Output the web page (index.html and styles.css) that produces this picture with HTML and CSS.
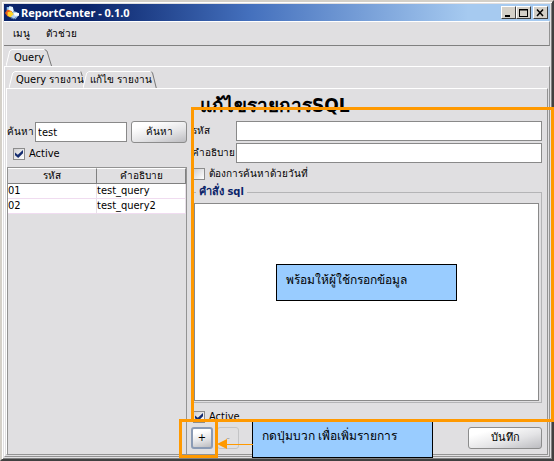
FILE: index.html
```html
<!DOCTYPE html>
<html lang="th">
<head>
<meta charset="utf-8">
<title>ReportCenter - 0.1.0</title>
<link rel="stylesheet" href="styles.css">
</head>
<body>
<div class="window">
  <header class="titlebar">
    <svg class="app-icon" viewBox="0 0 16 16" aria-hidden="true">
      <path d="M2 1h6l2 5-4 4-4-2z" fill="#8ac4ee"/>
      <path d="M5 0l4 1 1 5-4 2-2-4z" fill="#e8f6ff"/>
      <path d="M6 11l4-5 4 1 2 3-4 5-5-1z" fill="#b8d4ee"/>
      <path d="M0 8l3-4 5 2-1 5-4 1z" fill="#e85c18"/>
      <path d="M3 7l4-1 3 3-4 4-3-2z" fill="#ffd428"/>
      <path d="M10 8h6v3h-5z" fill="#fff"/>
      <path d="M7 13l3 2 3-2" fill="none" stroke="#395d9b"/>
    </svg>
    <h1 class="window-title">ReportCenter - 0.1.0</h1>
    <div class="window-controls">
      <button class="control" type="button" aria-label="Minimize"><svg viewBox="0 0 11 10"><path d="M2 8h5" stroke="#000" stroke-width="2"/></svg></button>
      <button class="control" type="button" aria-label="Maximize"><svg viewBox="0 0 11 10"><path d="M1 1.5h9M1.5 1v8M9.5 1v8M1 8.5h9M1 2h9" fill="none" stroke="#000"/></svg></button>
      <button class="control close" type="button" aria-label="Close"><svg viewBox="0 0 11 10"><path d="M2 1.500l6 6.500M8 1.500l-6 6.500" stroke="#000" stroke-width="1.500"/></svg></button>
    </div>
  </header>

  <nav class="menubar">
    <button type="button">เมนู</button>
    <button type="button">ตัวช่วย</button>
  </nav>

  <div class="tabs outer-tabs">
    <button class="tab" type="button">
      <svg class="tab-shape" viewBox="0 0 100 17" preserveAspectRatio="none" aria-hidden="true"><path class="lit" d="M0 17L8 2 13 .5H84"/><path class="shade" d="M84 .5L89 2 99 17"/></svg>
      <span>Query</span>
    </button>
  </div>
  <div class="outer-panel">
    <div class="tabs inner-tabs">
      <button class="tab" type="button">
        <svg class="tab-shape" viewBox="0 0 100 17" preserveAspectRatio="none" aria-hidden="true"><path class="lit" d="M0 17L5 2 8 .5H97"/><path class="shade" d="M97 .5L99 5"/></svg>
        <span>Query <span class="thai">รายงาน</span></span>
      </button>
      <button class="tab selected" type="button">
        <svg class="tab-shape" viewBox="0 0 100 17" preserveAspectRatio="none" aria-hidden="true"><path class="lit" d="M0 17L5 2 8 .5H92"/><path class="shade" d="M92 .5L94 2 99 17"/></svg>
        <span class="thai">แก้ไข รายงาน</span>
      </button>
    </div>

    <main class="inner-panel">
      <section class="sidebar">
        <form class="search">
          <label class="thai" for="search">ค้นหา</label>
          <input id="search" class="text" type="text" value="test">
          <button class="button thai" type="button">ค้นหา</button>
        </form>
        <label class="check sidebar-check"><input type="checkbox" checked>Active</label>
        <div class="table-box">
          <table>
            <thead><tr><th>รหัส</th><th>คำอธิบาย</th></tr></thead>
            <tbody>
              <tr><td>01</td><td>test_query</td></tr>
              <tr><td>02</td><td>test_query2</td></tr>
            </tbody>
          </table>
        </div>
      </section>

      <form class="editor">
        <h2>แก้ไขรายการSQL</h2>
        <div class="field"><label class="thai" for="code">รหัส</label><input id="code" class="text" type="text"></div>
        <div class="field"><label class="thai" for="desc">คำอธิบาย</label><input id="desc" class="text" type="text"></div>
        <label class="check date-check thai"><input type="checkbox">ต้องการค้นหาด้วยวันที่</label>
        <fieldset>
          <legend>คำสั่ง sql</legend>
          <textarea aria-label="คำสั่ง sql"></textarea>
        </fieldset>
        <label class="check active-check"><input type="checkbox" checked>Active</label>
        <div class="actions">
          <button class="button square focused" type="button">+</button>
          <button class="button square" type="button" disabled>-</button>
          <button class="button save" type="button">บันทึก</button>
        </div>
      </form>
    </main>
  </div>
</div>

<div class="highlight form-highlight"></div>
<div class="highlight add-highlight"></div>
<p class="callout form-callout">พร้อมให้ผู้ใช้กรอกข้อมูล</p>
<p class="callout add-callout">กดปุ่มบวก เพื่อเพิ่มรายการ</p>
<svg class="arrow" viewBox="0 0 36 10" aria-hidden="true"><path d="M0 5L10 0V10z" fill="#ff9900"/><path d="M8 5.500H36" stroke="#ff9900"/></svg>
</body>
</html>
```
FILE: styles.css
```css
* { box-sizing: border-box; }

:root {
  --face: #e0dfe1;
  --line: #939393;
  --orange: #ff9900;
  --navy: #0a246a;
}

body {
  position: relative;
  min-height: 100vh;
  margin: 0;
  display: flex;
  background: var(--face);
  color: #000;
  font: 11px/14px "DejaVu Sans Condensed", "DejaVu Sans", "Noto Sans", sans-serif;
}

button, input, textarea { font: inherit; color: inherit; }
button { margin: 0; padding: 0; border: 0; background: none; }
.thai { font-size: 10px; }

.window {
  flex: 1;
  min-width: 0;
  display: flex;
  flex-direction: column;
  padding: 2px;
  border: 2px solid;
  border-color: #d4d0c8 #404040 #404040 #d4d0c8;
  box-shadow: inset 1px 1px #fff, inset -1px -1px #808080;
}

.titlebar {
  height: 17px;
  display: flex;
  align-items: center;
  gap: 2px;
  padding: 0 2px 0 1px;
  background: linear-gradient(90deg, var(--navy) 15%, #4470bd 45%, #a6caf0 85%);
}
.app-icon { width: 14px; height: 16px; }
.window-title {
  flex: 1;
  margin: 0;
  color: #fff;
  font-family: "Noto Sans", "Open Sans", sans-serif;
  font-size: 11px;
  font-weight: bold;
}
.window-controls { display: flex; }
.control {
  width: 15px;
  height: 13px;
  display: flex;
  align-items: center;
  justify-content: center;
  background: #d4d0c8;
  border: 1px solid;
  border-color: #fff #404040 #404040 #fff;
}
.control svg { width: 11px; height: 10px; }
.close { margin-left: 2px; }

.menubar {
  height: 25px;
  display: flex;
  align-items: center;
  gap: 16px;
  padding-left: 9px;
  font-size: 10px;
  border-top: 1px solid #fff;
  border-right: 1px solid var(--line);
  border-bottom: 1px solid #808080;
}

.tabs { display: flex; }
.tab {
  position: relative;
  height: 17px;
  text-align: left;
  white-space: nowrap;
}
.tab-shape {
  position: absolute;
  inset: 0;
  width: 100%;
  height: 100%;
}
.tab-shape path { fill: none; vector-effect: non-scaling-stroke; }
.tab-shape .lit { stroke: #fff; }
.tab-shape .shade { stroke: #777; }
.tab span { position: relative; }

.outer-tabs { padding: 3px 0 0 2px; }
.outer-tabs .tab { width: 46px; padding-left: 8px; }
.outer-panel {
  flex: 1;
  display: flex;
  flex-direction: column;
  padding: 4px 1px 1px;
  border: 1px solid;
  border-color: #fff var(--line) var(--line) #fff;
}
.inner-tabs { padding-left: 3px; }
.inner-tabs .tab { width: 74px; padding-left: 7px; }

.inner-panel {
  flex: 1;
  display: grid;
  grid-template-columns: 180px minmax(0, 1fr);
  gap: 4px;
  border: 1px solid;
  border-color: #fff var(--line) var(--line) #fff;
}

.sidebar {
  display: flex;
  flex-direction: column;
  padding-top: 32px;
}
.search {
  display: flex;
  align-items: center;
  gap: 4px;
}
.search label { flex: none; width: 24px; white-space: nowrap; }
.search .text { flex: 1; min-width: 0; }
.search .button { width: 56px; }
.text {
  height: 20px;
  padding: 0 2px;
  background: #fff;
  border: 1px solid #898989;
  border-radius: 0;
}
.button {
  height: 22px;
  border: 1px solid #8c8c8c;
  border-radius: 3px;
  background: linear-gradient(165deg, #fff 20%, #e4e4e6 60%, #bcbcc0);
}

.check { display: flex; align-items: center; gap: 4px; }
.check input {
  appearance: none;
  width: 12px;
  height: 12px;
  margin: 0;
  display: grid;
  place-items: center;
  border: 1px solid #8c8c8c;
  background: linear-gradient(135deg, #cfcfd2, #fff);
}
.check input:checked::before {
  content: "";
  width: 8px;
  height: 8px;
  background: #142c70;
  clip-path: polygon(0 30%, 35% 60%, 100% 0, 100% 40%, 40% 100%, 0 65%);
}
.sidebar-check { padding: 4px 6px 6px; }

.table-box {
  flex: 1;
  border: 1px solid var(--line);
  border-bottom: 0;
}
table {
  width: 100%;
  table-layout: fixed;
  border-collapse: separate;
  border-spacing: 0;
}
th, td { height: 15px; padding: 0; line-height: 14px; }
th {
  height: 16px;
  font-size: 10px;
  font-weight: normal;
  border-top: 1px solid #fff;
  border-right: 1px solid #808080;
  border-bottom: 1px solid #808080;
}
td {
  background: #fff;
  border-right: 1px solid #e8e0e8;
  border-bottom: 1px solid #f0dcf0;
}

.editor {
  display: flex;
  flex-direction: column;
  padding-right: 5px;
}
h2 {
  height: 25px;
  margin: 4px 0 3px;
  padding-left: 9px;
  font-size: 19px;
  line-height: 25px;
  white-space: nowrap;
}
.field {
  display: flex;
  align-items: center;
  padding-left: 1px;
  margin-bottom: 2px;
}
.field label { width: 44px; white-space: nowrap; }
.field .text { flex: 1; min-width: 0; }
.date-check { padding: 2px 2px 4px; }
fieldset {
  flex: 1;
  display: flex;
  min-width: 0;
  margin: 0;
  padding: 4px 2px 1px;
  border: 1px solid #b4b4b6;
}
legend {
  height: 14px;
  margin-left: 2px;
  padding: 0 3px;
  color: var(--navy);
  font-weight: bold;
}
textarea {
  flex: 1;
  min-width: 0;
  resize: none;
  background: #fff;
  border: 1px solid #898989;
  border-radius: 0;
}
.active-check { padding: 7px 2px 0; }
.actions {
  display: flex;
  gap: 4px;
  padding: 3px 0 5px;
}
.square { width: 22px; }
.focused { border: 2px solid #8b9bb5; }
.button:disabled { color: #aaa; background: none; border-color: #c4c4c6; }
.save { width: 74px; margin-left: auto; }

.highlight { position: absolute; border: 3px solid var(--orange); }
.form-highlight { top: 107px; right: 0; bottom: 39px; left: 191px; }
.add-highlight { bottom: 3px; left: 179px; width: 39px; height: 39px; }

.callout {
  position: absolute;
  margin: 0;
  background: #99ccff;
  border: 1px solid #000;
  font-size: 12px;
  line-height: 20px;
  white-space: nowrap;
}
.form-callout { top: 264px; left: 276px; width: 181px; height: 37px; padding: 5px 9px; }
.add-callout { bottom: 3px; left: 252px; width: 181px; height: 36px; padding: 4px 9px; border-top: 0; }
.arrow { position: absolute; bottom: 12px; left: 217px; width: 36px; height: 10px; }
```
